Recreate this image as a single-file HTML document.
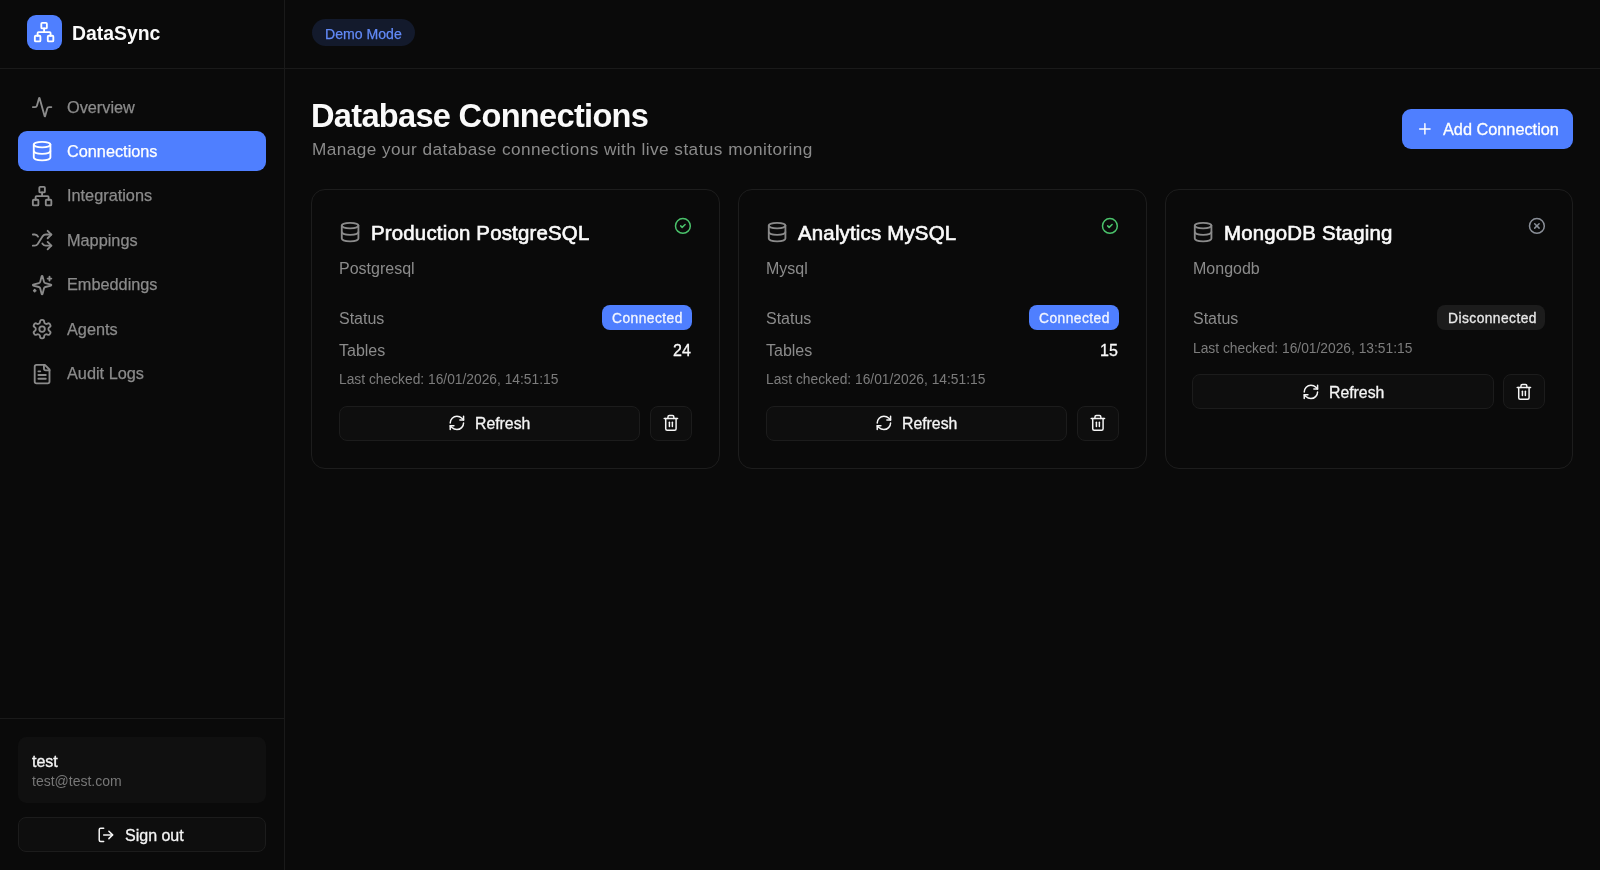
<!DOCTYPE html>
<html><head><meta charset="utf-8">
<style>
*{box-sizing:border-box;margin:0;padding:0}
html,body{width:1600px;height:870px;overflow:hidden;background:#0a0a0a;font-family:"Liberation Sans",sans-serif;color:#fafafa}
.a{position:absolute}
.t{position:absolute;white-space:nowrap;line-height:1;will-change:transform}
svg{position:absolute;fill:none;stroke:currentColor;stroke-width:2;stroke-linecap:round;stroke-linejoin:round;overflow:visible}
#side{left:0;top:0;width:285px;height:870px;border-right:1px solid #1a1a1a}
.hline{height:1px;background:#1a1a1a}
.nav{color:#8b8b8b;font-size:16.3px;-webkit-text-stroke:0.25px currentColor}
.card{border:1px solid #1e1e1e;border-radius:14px;top:189px;height:280px;width:409px}
.btn{border:1px solid #1c1c1c;background:#0e0e0e;border-radius:8px}
.lbl{color:#8b8b8b;font-size:16px}
.small{color:#7c7c7c;font-size:13.8px}
.ctitle{font-size:20.4px;letter-spacing:0.2px;-webkit-text-stroke:0.65px currentColor;color:#fafafa}
.bdg{font-size:13.8px;letter-spacing:0.45px;-webkit-text-stroke:0.3px currentColor}
.val{font-size:16px;-webkit-text-stroke:0.3px currentColor;color:#fafafa}
.btxt{font-size:15.8px;-webkit-text-stroke:0.3px currentColor;color:#f5f5f5}
.badge{border-radius:8px;background:#4f7fff}
</style></head><body>
<!-- sidebar -->
<div class="a" id="side"></div>
<div class="a hline" style="left:0;top:68px;width:1600px"></div>
<div class="a" style="left:26.8px;top:15px;width:35.4px;height:35.4px;border-radius:9px;background:#4f7fff"></div>
<svg style="left:33.2px;top:21.4px;width:22.2px;height:22.2px;color:#fff" viewBox="0 0 24 24"><rect x="16" y="16" width="6" height="6" rx="1"/><rect x="2" y="16" width="6" height="6" rx="1"/><rect x="9" y="2" width="6" height="6" rx="1"/><path d="M5 16v-3a1 1 0 0 1 1-1h12a1 1 0 0 1 1 1v3"/><path d="M12 12V8"/></svg>
<div class="t" style="left:72px;top:23.5px;font-size:19.4px;font-weight:bold">DataSync</div>

<div class="a" style="left:18px;top:131px;width:247.5px;height:40px;border-radius:9px;background:#4f7fff"></div>

<svg class="nav" style="left:31px;top:95.5px;width:22.2px;height:22.2px" viewBox="0 0 24 24"><path d="M22 12h-2.48a2 2 0 0 0-1.93 1.46l-2.35 8.36a.25.25 0 0 1-.48 0L9.240 2.18a.25.25 0 0 0-.48 0l-2.35 8.36A2 2 0 0 1 4.49 12H2"/></svg>
<div class="t nav" style="left:67px;top:98.9px">Overview</div>

<svg style="left:31px;top:140px;width:22.2px;height:22.2px;color:#fff" viewBox="0 0 24 24"><ellipse cx="12" cy="5" rx="9" ry="3"/><path d="M3 5V19A9 3 0 0 0 21 19V5"/><path d="M3 12A9 3 0 0 0 21 12"/></svg>
<div class="t nav" style="left:67px;top:142.9px;color:#fff">Connections</div>

<svg class="nav" style="left:31px;top:184.5px;width:22.2px;height:22.2px" viewBox="0 0 24 24"><rect x="16" y="16" width="6" height="6" rx="1"/><rect x="2" y="16" width="6" height="6" rx="1"/><rect x="9" y="2" width="6" height="6" rx="1"/><path d="M5 16v-3a1 1 0 0 1 1-1h12a1 1 0 0 1 1 1v3"/><path d="M12 12V8"/></svg>
<div class="t nav" style="left:67px;top:187px">Integrations</div>

<svg class="nav" style="left:31px;top:229px;width:22.2px;height:22.2px" viewBox="0 0 24 24"><path d="m18 14 4 4-4 4"/><path d="m18 2 4 4-4 4"/><path d="M2 18h1.973a4 4 0 0 0 3.3-1.7l5.454-8.6a4 4 0 0 1 3.3-1.7H22"/><path d="M2 6h1.972a4 4 0 0 1 3.6 2.2"/><path d="M22 18h-6.041a4 4 0 0 1-3.3-1.8l-.359-.45"/></svg>
<div class="t nav" style="left:67px;top:231.6px">Mappings</div>

<svg class="nav" style="left:31px;top:273.5px;width:22.2px;height:22.2px" viewBox="0 0 24 24"><path d="M9.937 15.5A2 2 0 0 0 8.5 14.063l-6.135-1.582a.5.5 0 0 1 0-.962L8.5 9.936A2 2 0 0 0 9.937 8.5l1.582-6.135a.5.5 0 0 1 .963 0L14.063 8.5A2 2 0 0 0 15.5 9.937l6.135 1.581a.5.5 0 0 1 0 .964L15.5 14.063a2 2 0 0 0-1.437 1.437l-1.582 6.135a.5.5 0 0 1-.963 0z"/><path d="M20 3v4"/><path d="M22 5h-4"/><path d="M4 17v2"/><path d="M5 18H3"/></svg>
<div class="t nav" style="left:67px;top:275.9px">Embeddings</div>

<svg class="nav" style="left:31px;top:318px;width:22.2px;height:22.2px" viewBox="0 0 24 24"><path d="M12.22 2h-.44a2 2 0 0 0-2 2v.18a2 2 0 0 1-1 1.73l-.43.25a2 2 0 0 1-2 0l-.15-.08a2 2 0 0 0-2.73.73l-.22.38a2 2 0 0 0 .73 2.730l.15.1a2 2 0 0 1 1 1.72v.51a2 2 0 0 1-1 1.74l-.15.09a2 2 0 0 0-.73 2.73l.22.38a2 2 0 0 0 2.73.73l.15-.08a2 2 0 0 1 2 0l.43.25a2 2 0 0 1 1 1.73V20a2 2 0 0 0 2 2h.44a2 2 0 0 0 2-2v-.18a2 2 0 0 1 1-1.73l.43-.25a2 2 0 0 1 2 0l.15.08a2 2 0 0 0 2.73-.73l.22-.39a2 2 0 0 0-.73-2.73l-.15-.08a2 2 0 0 1-1-1.74v-.5a2 2 0 0 1 1-1.74l.15-.09a2 2 0 0 0 .73-2.73l-.22-.38a2 2 0 0 0-2.73-.73l-.15.08a2 2 0 0 1-2 0l-.43-.25a2 2 0 0 1-1-1.73V4a2 2 0 0 0-2-2z"/><circle cx="12" cy="12" r="3"/></svg>
<div class="t nav" style="left:67px;top:320.5px">Agents</div>

<svg class="nav" style="left:31px;top:362.5px;width:22.2px;height:22.2px" viewBox="0 0 24 24"><path d="M15 2H6a2 2 0 0 0-2 2v16a2 2 0 0 0 2 2h12a2 2 0 0 0 2-2V7Z"/><path d="M14 2v4a2 2 0 0 0 2 2h4"/><path d="M10 9H8"/><path d="M16 13H8"/><path d="M16 17H8"/></svg>
<div class="t nav" style="left:67px;top:364.8px">Audit Logs</div>

<!-- sidebar footer -->
<div class="a hline" style="left:0;top:718px;width:284px"></div>
<div class="a" style="left:18px;top:737px;width:247.5px;height:66px;border-radius:8.5px;background:#101010"></div>
<div class="t" style="left:31.5px;top:754px;font-size:16px;-webkit-text-stroke:0.35px currentColor;color:#f5f5f5">test</div>
<div class="t" style="left:31.5px;top:773.5px;font-size:14px;color:#777">test@test.com</div>
<div class="a btn" style="left:18px;top:817px;width:247.5px;height:35px"></div>
<svg style="left:97px;top:825.5px;width:17.8px;height:17.8px;color:#f5f5f5" viewBox="0 0 24 24"><path d="M9 21H5a2 2 0 0 1-2-2V5a2 2 0 0 1 2-2h4"/><polyline points="16 17 21 12 16 7"/><line x1="21" x2="9" y1="12" y2="12"/></svg>
<div class="t" style="left:125px;top:828px;font-size:16px;-webkit-text-stroke:0.3px currentColor;color:#f5f5f5">Sign out</div>

<!-- header -->
<div class="a" style="left:312px;top:19px;width:103px;height:27px;border-radius:14px;background:#131a2c"></div>
<div class="t" style="left:324.8px;top:26.8px;font-size:14.1px;color:#628af7;-webkit-text-stroke:0.25px currentColor">Demo Mode</div>

<div class="t" style="left:311px;top:100px;font-size:32.6px;font-weight:bold;letter-spacing:-0.7px;color:#fafafa">Database Connections</div>
<div class="t" style="left:312px;top:140.5px;font-size:17.2px;letter-spacing:0.45px;color:#8b8b8b">Manage your database connections with live status monitoring</div>

<div class="a" style="left:1402px;top:109px;width:171px;height:40px;border-radius:9px;background:#4f7fff"></div>
<svg style="left:1415.5px;top:120px;width:17.8px;height:17.8px;color:#fff" viewBox="0 0 24 24"><path d="M5 12h14"/><path d="M12 5v14"/></svg>
<div class="t" style="left:1443px;top:120.5px;font-size:16.3px;-webkit-text-stroke:0.3px currentColor;color:#fff">Add Connection</div>

<!-- cards -->
<div class="a" style="left:311.2px;top:189.3px;width:408.5px;height:280px">
<div class="a" style="left:0;top:0;width:408.5px;height:280px;border:1px solid #1d1d1d;border-radius:14px"></div>
<svg style="left:27.5px;top:31.8px;width:22.2px;height:22.2px;color:#8b8b8b" viewBox="0 0 24 24"><ellipse cx="12" cy="5" rx="9" ry="3"/><path d="M3 5V19A9 3 0 0 0 21 19V5"/><path d="M3 12A9 3 0 0 0 21 12"/></svg>
<div class="t ctitle" style="left:59.5px;top:33.5px">Production PostgreSQL</div>
<svg style="left:363px;top:27.3px;width:17.8px;height:17.8px;color:#4ac26b" viewBox="0 0 24 24"><circle cx="12" cy="12" r="10"/><path d="m9 12 2 2 4-4"/></svg>
<div class="t lbl" style="left:28px;top:71.5px">Postgresql</div>
<div class="t lbl" style="left:28px;top:121.8px">Status</div>
<div class="a badge" style="left:290.5px;top:116px;width:90.3px;height:24.7px"></div>
<div class="t bdg" style="left:300.5px;top:123px;color:#f2f5ff">Connected</div>
<div class="t lbl" style="left:28px;top:153.5px">Tables</div>
<div class="t val" style="right:28.5px;top:153.5px">24</div>
<div class="t small" style="left:28px;top:184px">Last checked: 16/01/2026, 14:51:15</div>
<div class="a btn" style="left:27.9px;top:216.7px;width:301.2px;height:34.6px"></div>
<svg style="left:137px;top:225.0px;width:17.8px;height:17.8px;color:#f5f5f5" viewBox="0 0 24 24"><path d="M3 12a9 9 0 0 1 9-9 9.75 9.75 0 0 1 6.74 2.74L21 8"/><path d="M21 3v5h-5"/><path d="M21 12a9 9 0 0 1-9 9 9.75 9.75 0 0 1-6.74-2.74L3 16"/><path d="M8 16H3v5"/></svg>
<div class="t btxt" style="left:164px;top:227.0px">Refresh</div>
<div class="a btn" style="left:338.75px;top:216.7px;width:41.65px;height:34.6px"></div>
<svg style="left:350.6px;top:225.0px;width:17.8px;height:17.8px;color:#f5f5f5" viewBox="0 0 24 24"><path d="M3 6h18"/><path d="M19 6v14c0 1-1 2-2 2H7c-1 0-2-1-2-2V6"/><path d="M8 6V4c0-1 1-2 2-2h4c1 0 2 1 2 2v2"/><line x1="10" x2="10" y1="11" y2="17"/><line x1="14" x2="14" y1="11" y2="17"/></svg>
</div>
<div class="a" style="left:738.2px;top:189.3px;width:408.5px;height:280px">
<div class="a" style="left:0;top:0;width:408.5px;height:280px;border:1px solid #1d1d1d;border-radius:14px"></div>
<svg style="left:27.5px;top:31.8px;width:22.2px;height:22.2px;color:#8b8b8b" viewBox="0 0 24 24"><ellipse cx="12" cy="5" rx="9" ry="3"/><path d="M3 5V19A9 3 0 0 0 21 19V5"/><path d="M3 12A9 3 0 0 0 21 12"/></svg>
<div class="t ctitle" style="left:59.5px;top:33.5px">Analytics MySQL</div>
<svg style="left:363px;top:27.3px;width:17.8px;height:17.8px;color:#4ac26b" viewBox="0 0 24 24"><circle cx="12" cy="12" r="10"/><path d="m9 12 2 2 4-4"/></svg>
<div class="t lbl" style="left:28px;top:71.5px">Mysql</div>
<div class="t lbl" style="left:28px;top:121.8px">Status</div>
<div class="a badge" style="left:290.5px;top:116px;width:90.3px;height:24.7px"></div>
<div class="t bdg" style="left:300.5px;top:123px;color:#f2f5ff">Connected</div>
<div class="t lbl" style="left:28px;top:153.5px">Tables</div>
<div class="t val" style="right:28.5px;top:153.5px">15</div>
<div class="t small" style="left:28px;top:184px">Last checked: 16/01/2026, 14:51:15</div>
<div class="a btn" style="left:27.9px;top:216.7px;width:301.2px;height:34.6px"></div>
<svg style="left:137px;top:225.0px;width:17.8px;height:17.8px;color:#f5f5f5" viewBox="0 0 24 24"><path d="M3 12a9 9 0 0 1 9-9 9.75 9.75 0 0 1 6.74 2.74L21 8"/><path d="M21 3v5h-5"/><path d="M21 12a9 9 0 0 1-9 9 9.75 9.75 0 0 1-6.74-2.74L3 16"/><path d="M8 16H3v5"/></svg>
<div class="t btxt" style="left:164px;top:227.0px">Refresh</div>
<div class="a btn" style="left:338.75px;top:216.7px;width:41.65px;height:34.6px"></div>
<svg style="left:350.6px;top:225.0px;width:17.8px;height:17.8px;color:#f5f5f5" viewBox="0 0 24 24"><path d="M3 6h18"/><path d="M19 6v14c0 1-1 2-2 2H7c-1 0-2-1-2-2V6"/><path d="M8 6V4c0-1 1-2 2-2h4c1 0 2 1 2 2v2"/><line x1="10" x2="10" y1="11" y2="17"/><line x1="14" x2="14" y1="11" y2="17"/></svg>
</div>
<div class="a" style="left:1164.6px;top:189.3px;width:408.5px;height:280px">
<div class="a" style="left:0;top:0;width:408.5px;height:280px;border:1px solid #1d1d1d;border-radius:14px"></div>
<svg style="left:27.5px;top:31.8px;width:22.2px;height:22.2px;color:#8b8b8b" viewBox="0 0 24 24"><ellipse cx="12" cy="5" rx="9" ry="3"/><path d="M3 5V19A9 3 0 0 0 21 19V5"/><path d="M3 12A9 3 0 0 0 21 12"/></svg>
<div class="t ctitle" style="left:59.5px;top:33.5px">MongoDB Staging</div>
<svg style="left:363px;top:27.3px;width:17.8px;height:17.8px;color:#8a8f98" viewBox="0 0 24 24"><circle cx="12" cy="12" r="10"/><path d="m15 9-6 6"/><path d="m9 9 6 6"/></svg>
<div class="t lbl" style="left:28px;top:71.5px">Mongodb</div>
<div class="t lbl" style="left:28px;top:121.8px">Status</div>
<div class="a" style="left:272.5px;top:116px;width:108.3px;height:24.7px;border-radius:8px;background:#1c1c1c"></div>
<div class="t bdg" style="left:283px;top:123px;color:#e8e8e8">Disconnected</div>
<div class="t small" style="left:28px;top:153px">Last checked: 16/01/2026, 13:51:15</div>
<div class="a btn" style="left:27.9px;top:185.2px;width:301.2px;height:34.6px"></div>
<svg style="left:137px;top:193.5px;width:17.8px;height:17.8px;color:#f5f5f5" viewBox="0 0 24 24"><path d="M3 12a9 9 0 0 1 9-9 9.75 9.75 0 0 1 6.74 2.74L21 8"/><path d="M21 3v5h-5"/><path d="M21 12a9 9 0 0 1-9 9 9.75 9.75 0 0 1-6.74-2.74L3 16"/><path d="M8 16H3v5"/></svg>
<div class="t btxt" style="left:164px;top:195.5px">Refresh</div>
<div class="a btn" style="left:338.75px;top:185.2px;width:41.65px;height:34.6px"></div>
<svg style="left:350.6px;top:193.5px;width:17.8px;height:17.8px;color:#f5f5f5" viewBox="0 0 24 24"><path d="M3 6h18"/><path d="M19 6v14c0 1-1 2-2 2H7c-1 0-2-1-2-2V6"/><path d="M8 6V4c0-1 1-2 2-2h4c1 0 2 1 2 2v2"/><line x1="10" x2="10" y1="11" y2="17"/><line x1="14" x2="14" y1="11" y2="17"/></svg>
</div>
</body></html>
